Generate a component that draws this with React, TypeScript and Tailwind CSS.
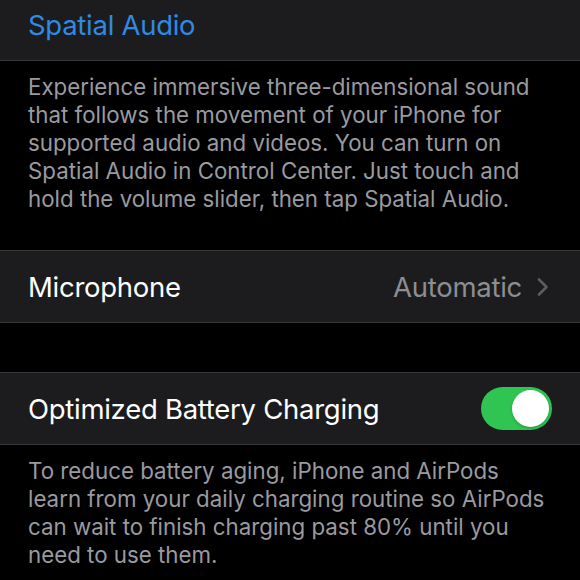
import React from "react";

function Chevron() {
  return (
    <svg width="14" height="20" viewBox="0 0 14 20" fill="none" className="ml-[14px]">
      <path d="M3 2.5 L10.5 10 L3 17.5" stroke="#5c5c61" strokeWidth="2.6" strokeLinecap="round" strokeLinejoin="round" />
    </svg>
  );
}

function Toggle() {
  return (
    <div className="w-[71px] h-[43px] rounded-full bg-[#30c552] p-[3px] flex justify-end">
      <div className="w-[37px] h-[37px] rounded-full bg-white shadow-[0_1px_3px_rgba(0,0,0,0.25)]" />
    </div>
  );
}

const spatialLines = [
  "Experience immersive three-dimensional sound",
  "that follows the movement of your iPhone for",
  "supported audio and videos. You can turn on",
  "Spatial Audio in Control Center. Just touch and",
  "hold the volume slider, then tap Spatial Audio.",
];

const chargingLines = [
  "To reduce battery aging, iPhone and AirPods",
  "learn from your daily charging routine so AirPods",
  "can wait to finish charging past 80% until you",
  "need to use them.",
];

function Footnote({ lines, className }: { lines: string[]; className?: string }) {
  return (
    <p className={`pl-[28px] pr-[8px] pt-[12px] text-[22.3px] leading-[28px] text-[#9a9a9f] whitespace-nowrap ${className ?? ""}`}>
      {lines.map((line, i) => (
        <React.Fragment key={i}>
          {line}
          {i < lines.length - 1 && <br />}
        </React.Fragment>
      ))}
    </p>
  );
}

export default function App() {
  return (
    <div className="w-[580px] h-[580px] overflow-hidden bg-black font-['Inter','Noto_Sans',sans-serif]">
      <div className="h-[61px] bg-[#1c1c1e] border-b border-[#38383a] pl-[28px] pt-[8px]">
        <span className="text-[27.5px] leading-[34px] tracking-[-0.01em] text-[#2f8ae3]">Spatial Audio</span>
      </div>

      <Footnote lines={spatialLines} className="pb-[37px]" />

      <div className="h-[73px] bg-[#1c1c1e] border-y border-[#38383a] flex items-center justify-between pl-[28px] pr-[30px]">
        <span className="text-[27.5px] leading-[34px] tracking-[-0.01em] text-white">Microphone</span>
        <div className="flex items-center">
          <span className="text-[27.5px] leading-[34px] tracking-[-0.01em] text-[#8d8d92]">Automatic</span>
          <Chevron />
        </div>
      </div>

      <div className="h-[49px]" />

      <div className="h-[73px] bg-[#1c1c1e] border-y border-[#38383a] flex items-center justify-between pl-[28px] pr-[28px]">
        <span className="text-[27.5px] leading-[34px] tracking-[-0.01em] text-white">Optimized Battery Charging</span>
        <Toggle />
      </div>

      <Footnote lines={chargingLines} />
    </div>
  );
}
